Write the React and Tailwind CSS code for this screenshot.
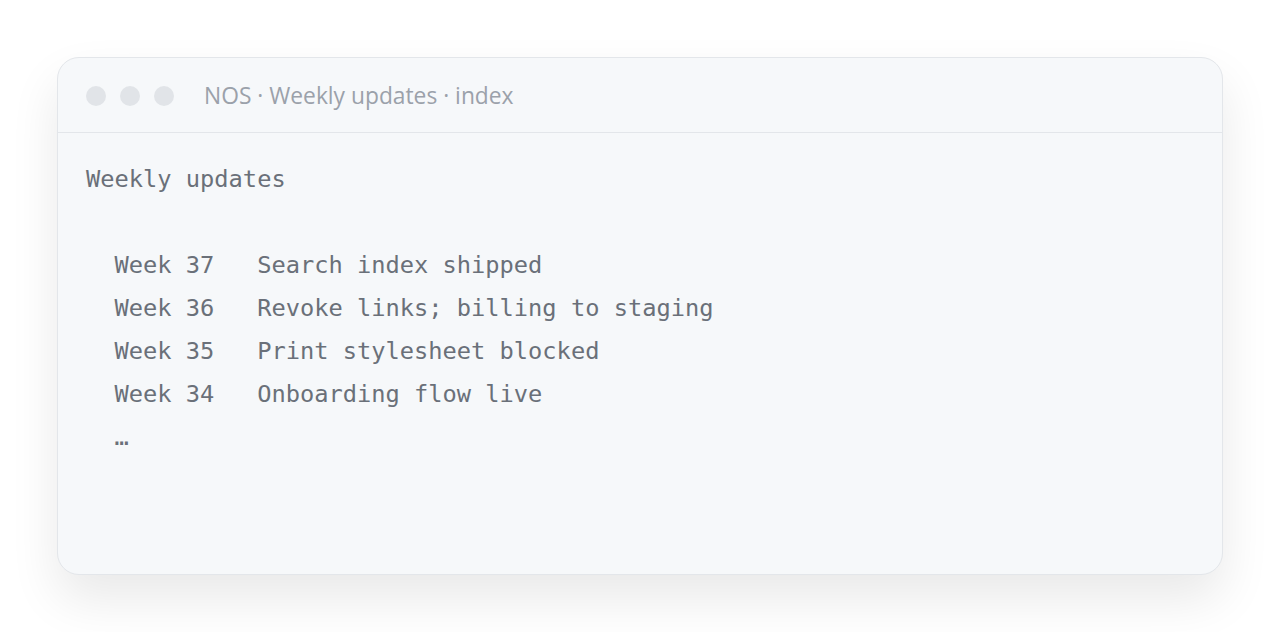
import React from 'react';

const updates = [
  ['Week 37', 'Search index shipped'],
  ['Week 36', 'Revoke links; billing to staging'],
  ['Week 35', 'Print stylesheet blocked'],
  ['Week 34', 'Onboarding flow live'],
];

const App = () => {
  const text =
    'Weekly updates\n\n' +
    updates.map(([week, note]) => `  ${week}   ${note}`).join('\n') +
    '\n  …';

  return (
    <div className="min-h-[632px] bg-white px-[57px] pt-[57px]">
      <div className="h-[518px] rounded-[22px] border border-[#e3e6ea] bg-[#f6f8fa] shadow-[0_24px_50px_rgba(0,0,0,0.09)] overflow-hidden">
        <div className="flex h-[75px] items-center border-b border-[#e3e6ea] pl-[28px] pt-[2px]">
          <div className="flex gap-[14px]">
            <span className="h-5 w-5 rounded-full bg-[#e1e4e8]" />
            <span className="h-5 w-5 rounded-full bg-[#e1e4e8]" />
            <span className="h-5 w-5 rounded-full bg-[#e1e4e8]" />
          </div>
          <span className="ml-[30px] font-['Open_Sans',sans-serif] text-[22.8px] text-[#9ba1aa]">
            NOS · Weekly updates · index
          </span>
        </div>
        <pre className="px-[28px] pt-[25px] font-['DejaVu_Sans_Mono',monospace] text-[23.7px] leading-[43px] text-[#6a7079]">
          {text}
        </pre>
      </div>
    </div>
  );
};

export default App;
